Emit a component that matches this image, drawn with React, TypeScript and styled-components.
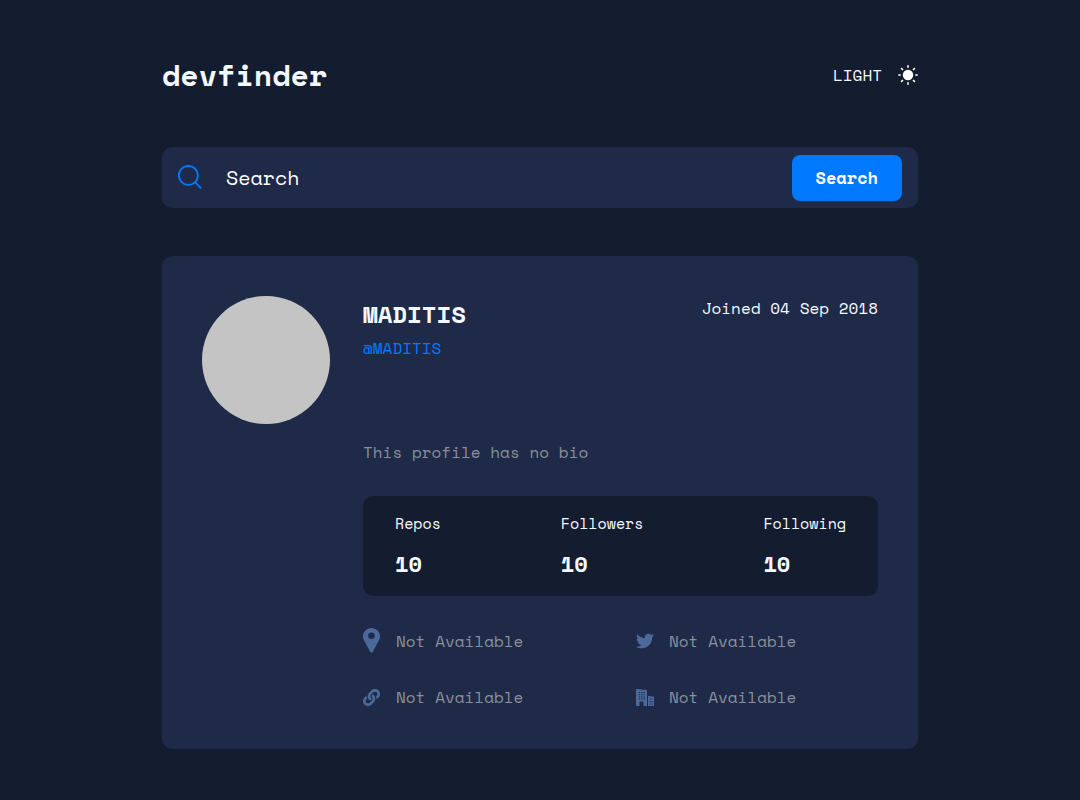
import React from "react";
import styled, { createGlobalStyle } from "styled-components";
import { FaLink, FaTwitter } from "react-icons/fa";

const GlobalStyle = createGlobalStyle`
  *, *::before, *::after { box-sizing: border-box; }
  body {
    margin: 0;
    background: #141d2f;
    color: #f4f8ff;
    font-family: "Space Mono", "Liberation Mono", monospace;
    font-size: 16px;
    line-height: 24px;
  }
  h1, h2, p, dl, dd, ul { margin: 0; padding: 0; }
  button, input { font: inherit; border: 0; }
`;

const Page = styled.div`
  width: 70%;
  min-width: 600px;
  margin: 0 auto;
  padding: 51px 0;
`;

const Header = styled.header`
  display: flex;
  align-items: center;
  justify-content: space-between;
  height: 48px;
  margin-bottom: 48px;
`;

const Brand = styled.h1`
  font-size: 30px;
  line-height: 48px;
`;

const ThemeButton = styled.button`
  display: flex;
  align-items: center;
  gap: 16px;
  padding: 0;
  background: none;
  color: #f4f8ff;
  cursor: pointer;
`;

const SearchForm = styled.form`
  display: flex;
  align-items: center;
  height: 61px;
  margin-bottom: 48px;
  padding: 0 16px;
  border-radius: 10px;
  background: #1e2a47;
`;

const SearchInput = styled.input`
  flex: 1;
  min-width: 0;
  margin: 0 24px;
  padding: 0;
  background: none;
  color: #fff;
  font-size: 20px;
  line-height: 28px;
  outline: none;
  &::placeholder { color: #fff; opacity: 1; }
`;

const SearchButton = styled.button`
  height: 46px;
  padding: 0 24px;
  border-radius: 8px;
  background: #0079ff;
  color: #fff;
  font-size: 17px;
  font-weight: 700;
  cursor: pointer;
`;

const Card = styled.main`
  display: grid;
  grid-template-columns: 128px 1fr;
  column-gap: 33px;
  padding: 40px;
  border-radius: 10px;
  background: #1e2a47;
`;

const Avatar = styled.div`
  width: 128px;
  height: 128px;
  border-radius: 50%;
  background: #c4c4c4;
`;

const Identity = styled.div`
  display: flex;
  align-items: flex-start;
  justify-content: space-between;
  height: 128px;
`;

const Name = styled.h2`
  margin-bottom: 4px;
  font-size: 24px;
  line-height: 36px;
`;

const Handle = styled.a`
  color: #0079ff;
  text-decoration: none;
`;

const Details = styled.div`
  grid-column: 2;
  padding-top: 16px;
`;

const Bio = styled.p`
  margin-bottom: 32px;
  color: #8a8f9b;
`;

const Stats = styled.dl`
  display: flex;
  justify-content: space-between;
  height: 100px;
  margin-bottom: 32px;
  padding: 16px 32px;
  border-radius: 10px;
  background: #141d2f;
`;

const StatLabel = styled.dt`
  margin-bottom: 14px;
  font-size: 15px;
  line-height: 22px;
`;

const StatValue = styled.dd`
  font-size: 22px;
  line-height: 32px;
  font-weight: 700;
`;

const Contacts = styled.ul`
  display: grid;
  grid-template-columns: 273px 1fr;
  row-gap: 31px;
  list-style: none;
`;

const Contact = styled.li`
  display: flex;
  align-items: center;
  gap: 15px;
  color: #8a8f9b;
  svg { color: #4b6a9b; }
`;

const IconBox = styled.span`
  display: flex;
  width: 18px;
`;

const SunIcon = () => (
  <svg width="20" height="20" viewBox="0 0 20 20" aria-hidden="true">
    <circle cx="10" cy="10" r="5.2" fill="#fff" />
    <path
      d="M10 0.3v2.4M10 17.3v2.4M0.3 10h2.4M17.3 10h2.4M3.1 3.1l1.9 1.9M15 15l1.9 1.9M3.1 16.9L5 15M15 5l1.9-1.9"
      stroke="#fff"
      strokeWidth="1.6"
    />
  </svg>
);

const SearchIcon = () => (
  <svg width="24" height="25" viewBox="0 0 24 25" fill="none" stroke="#0079ff" strokeWidth="1.9" aria-hidden="true">
    <circle cx="10.4" cy="10.4" r="9.5" />
    <path d="M17 17.2l6.1 6.2" />
  </svg>
);

const PinIcon = () => (
  <svg width="17" height="26" viewBox="0 0 17 26" fill="currentColor" aria-hidden="true">
    <path
      fillRule="evenodd"
      d="M8.5 0C3.8 0 0 3.7 0 8.4c0 1.5.4 2.9 1.1 4.2l6.2 11.5c.5 1 1.9 1 2.4 0l6.2-11.5c.7-1.3 1.1-2.7 1.1-4.2C17 3.7 13.2 0 8.5 0zm0 4.4a3.3 3.3 0 1 1 0 6.6 3.3 3.3 0 0 1 0-6.6z"
    />
  </svg>
);

const BuildingIcon = () => (
  <svg width="18" height="18" viewBox="0 0 18 18" fill="currentColor" aria-hidden="true">
    <path
      fillRule="evenodd"
      d="M0 1.8C0 1.3.3 1 .8 1.1l9.5 1c.4.1.7.4.7.8V18H7.4v-4.5H3.6V18H0zM2.6 4v1h1.6V4zm2.5 0v1h1.5V4zm2.4 0v1H9V4zM2.6 6.2v1h1.6v-1zm2.5 0v1h1.5v-1zm2.4 0v1H9v-1zM2.6 8.4v1h1.6v-1zm2.5 0v1h1.5v-1zm2.4 0v1H9v-1zM2.6 10.6v.9h1.6v-.9zm2.5 0v.9h1.5v-.9zm2.4 0v.9H9v-.9z"
    />
    <path
      fillRule="evenodd"
      d="M12 7.9l5.3.7c.4.1.7.4.7.8V18h-6zm1.6 2.6v1.1h1.1v-1.1zm1.9 0v1.1h1.1v-1.1zm-1.9 2.6v1.1h1.1v-1.1zm1.9 0v1.1h1.1v-1.1zm-1.9 2.4v1.1h1.1v-1.1zm1.9 0v1.1h1.1v-1.1z"
    />
  </svg>
);

const stats = [
  { label: "Repos", value: 10 },
  { label: "Followers", value: 10 },
  { label: "Following", value: 10 },
];

const contacts = [
  { id: "location", icon: <PinIcon />, text: "Not Available" },
  { id: "twitter", icon: <FaTwitter size={18} />, text: "Not Available" },
  { id: "website", icon: <FaLink size={17} />, text: "Not Available" },
  { id: "company", icon: <BuildingIcon />, text: "Not Available" },
];

export default function App() {
  return (
    <>
      <GlobalStyle />
      <Page>
        <Header>
          <Brand>devfinder</Brand>
          <ThemeButton type="button">
            LIGHT
            <SunIcon />
          </ThemeButton>
        </Header>
        <SearchForm onSubmit={(event) => event.preventDefault()}>
          <SearchIcon />
          <SearchInput type="text" aria-label="Search" placeholder="Search" />
          <SearchButton type="submit">Search</SearchButton>
        </SearchForm>
        <Card>
          <Avatar />
          <Identity>
            <div>
              <Name>MADITIS</Name>
              <Handle href="#">@MADITIS</Handle>
            </div>
            <p>Joined 04 Sep 2018</p>
          </Identity>
          <Details>
            <Bio>This profile has no bio</Bio>
            <Stats>
              {stats.map((stat) => (
                <div key={stat.label}>
                  <StatLabel>{stat.label}</StatLabel>
                  <StatValue>{stat.value}</StatValue>
                </div>
              ))}
            </Stats>
            <Contacts>
              {contacts.map((contact) => (
                <Contact key={contact.id}>
                  <IconBox>{contact.icon}</IconBox>
                  {contact.text}
                </Contact>
              ))}
            </Contacts>
          </Details>
        </Card>
      </Page>
    </>
  );
}
